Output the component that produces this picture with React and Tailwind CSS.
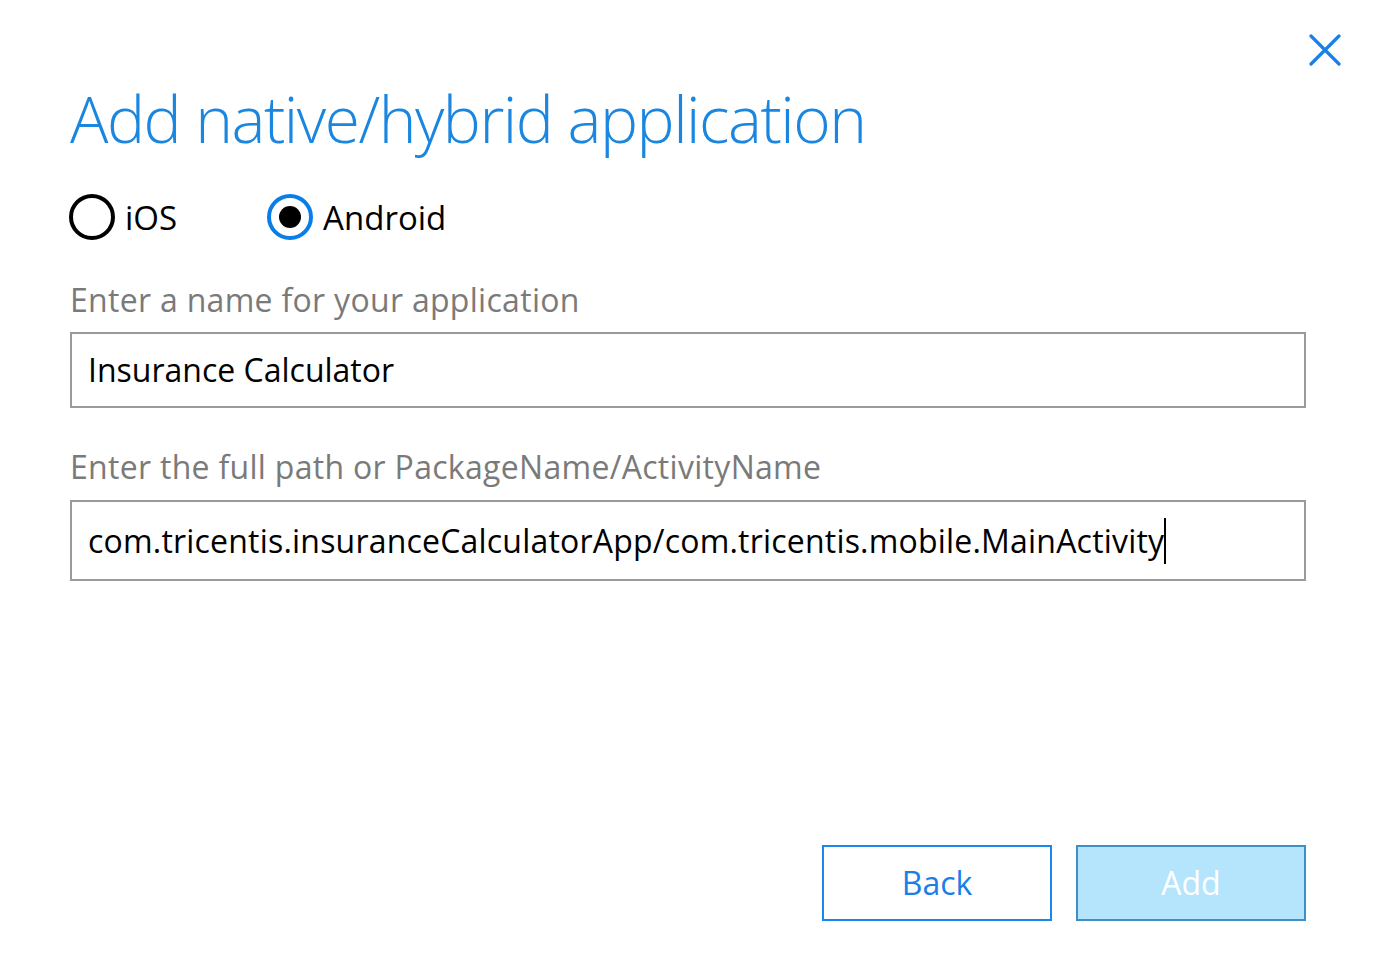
import React, { useState } from 'react';

const font = { fontFamily: '"Open Sans", "Noto Sans", sans-serif' };

const Radio = ({ checked, label, onClick }) => (
  <button type="button" onClick={onClick} className="flex items-center gap-[10px]">
    <span
      className={`w-[46px] h-[46px] rounded-full border-[4px] flex items-center justify-center ${
        checked ? 'border-[#0a7ee8]' : 'border-black'
      }`}
    >
      {checked && <span className="w-[22px] h-[22px] rounded-full bg-black" />}
    </span>
    <span className="text-[33px] text-black leading-none">{label}</span>
  </button>
);

export default function App() {
  const [platform, setPlatform] = useState('android');

  return (
    <div className="w-[1377px] h-[971px] bg-white relative" style={font}>
      {/* close */}
      <button className="absolute top-[34px] right-[36px] text-[#1a7fe6]">
        <svg width="32" height="32" viewBox="0 0 32 32" fill="none" stroke="currentColor" strokeWidth="3.2" strokeLinecap="round">
          <path d="M2 2 L30 30 M30 2 L2 30" />
        </svg>
      </button>

      <div className="pl-[70px] pr-[71px] pt-[87px] flex flex-col">
        <h1 className="text-[64px] font-light text-[#1a86e0] leading-none tracking-[-1.5px]">
          Add native/hybrid application
        </h1>

        <div className="flex items-center gap-[90px] mt-[43px] -ml-[1px]">
          <Radio label="iOS" checked={platform === 'ios'} onClick={() => setPlatform('ios')} />
          <Radio label="Android" checked={platform === 'android'} onClick={() => setPlatform('android')} />
        </div>

        <label className="mt-[44px] text-[32px] tracking-[0.3px] text-[#7a7a7a] leading-none">
          Enter a name for your application
        </label>
        <div className="mt-[16px] h-[76px] border-2 border-[#9a9a9a] flex items-center px-[16px]">
          <span className="text-[32px] text-black leading-none">Insurance Calculator</span>
        </div>

        <label className="mt-[43px] text-[32px] tracking-[0.3px] text-[#7a7a7a] leading-none">
          Enter the full path or PackageName/ActivityName
        </label>
        <div className="mt-[17px] h-[81px] border-2 border-[#9a9a9a] flex items-center px-[16px]">
          <span className="text-[32px] tracking-[0.2px] text-black leading-none">
            com.tricentis.insuranceCalculatorApp/com.tricentis.mobile.MainActivity
          </span>
          <span className="w-[2px] h-[46px] bg-black" />
        </div>

        <div className="flex justify-end gap-[24px] mt-[264px]">
          <button className="w-[230px] h-[76px] border-2 border-[#1a86f0] bg-white text-[#1a7fe6] text-[32px]">
            Back
          </button>
          <button className="w-[230px] h-[76px] border-2 border-[#3d8fc4] bg-[#b5e5fd] text-white text-[32px]">
            Add
          </button>
        </div>
      </div>
    </div>
  );
}
